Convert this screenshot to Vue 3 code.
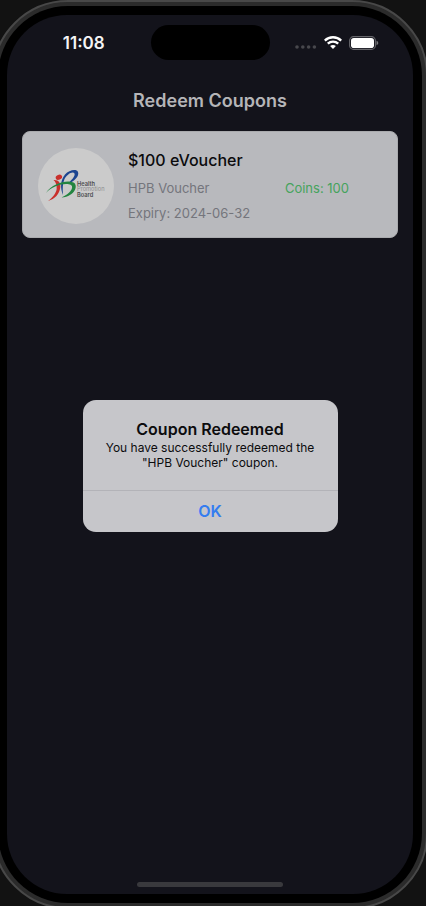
<script setup>
import { ref } from 'vue'

const coupons = [
  { id: 1, title: '$100 eVoucher', provider: 'HPB Voucher', expiry: '2024-06-32', coins: 100 },
]
const redeemed = ref(coupons[0])
</script>

<template>
  <div class="stage">
    <div class="device">
      <div class="bezel">
        <div class="screen">
          <header class="status">
            <span class="time">11:08</span>
            <span class="island"></span>
            <span class="indicators">
              <svg class="dots" width="22" height="4" viewBox="0 0 22 4" aria-hidden="true">
                <circle cx="2" cy="2" r="1.8" />
                <circle cx="7.8" cy="2" r="1.8" />
                <circle cx="13.6" cy="2" r="1.8" />
                <circle cx="19.4" cy="2" r="1.8" />
              </svg>
              <svg width="18" height="14" viewBox="0 0 18 14" aria-hidden="true">
                <g fill="none" stroke="#fff" stroke-width="2.4">
                  <path d="M.8 4.600C5.300 .2 12.700 .2 17.200 4.600" />
                  <path d="M3.800 7.700c3-2.8 7.400-2.8 10.400 0" />
                </g>
                <path d="M6.1 10.1c1.700-1.500 4.100-1.500 5.800 0L9 13.100z" fill="#fff" />
              </svg>
              <svg width="30" height="14" viewBox="0 0 30 14" aria-hidden="true">
                <rect x=".6" y=".6" width="25.8" height="12.8" rx="4" fill="none" stroke="#66666b" stroke-width="1.1" />
                <rect x="2" y="2" width="23" height="10" rx="2.8" fill="#fff" />
                <path d="M27.5 4.8c2.3.7 2.3 3.7 0 4.4z" fill="#77777b" />
              </svg>
            </span>
          </header>

          <main class="content">
            <h1>Redeem Coupons</h1>
            <article v-for="coupon in coupons" :key="coupon.id" class="card">
              <div class="logo">
                <svg width="76" height="76" viewBox="0 0 76 76" role="img" aria-label="Health Promotion Board">
                  <path d="M25 47C22 40 22.500 32 27 26.500C31 22 38.500 20.500 40 24C41.500 28 36.500 33.500 29 36C33.500 32.500 37.500 28 36.500 25.500C35 22.500 29 26 26.500 31C24.500 35.500 24.500 41 25 47Z" fill="#1c4590" />
                  <path d="M15.500 32C20.500 31.500 23 35 22.300 39.500C21.500 46 17 51 10 53C14.500 49.500 18.500 45 18.700 40.500C18.700 36.500 17.700 34 15.500 32Z" fill="#c9302c" />
                  <ellipse cx="20.900" cy="29.300" rx="3.300" ry="2.500" transform="rotate(-22 20.900 29.300)" fill="#c9302c" />
                  <path d="M8 45C14 35.500 29 31.500 35.500 34.500C40.500 37 37.500 48.500 23.500 49.500C31.500 46 36.500 39.500 33 37C28 34.500 15 37 8 45Z" fill="#238540" />
                  <g font-family="Inter, sans-serif" font-size="5.700">
                    <text x="39" y="37.500" fill="#4c4c4f" font-weight="600">Health</text>
                    <text x="39" y="43" fill="#8b8b8e">Promotion</text>
                    <text x="39" y="48.500" fill="#4c4c4f" font-weight="600">Board</text>
                  </g>
                </svg>
              </div>
              <div class="details">
                <h2>{{ coupon.title }}</h2>
                <p>{{ coupon.provider }}</p>
                <p>Expiry: {{ coupon.expiry }}</p>
              </div>
              <p class="coins">Coins: {{ coupon.coins }}</p>
            </article>
          </main>

          <span class="home-bar"></span>

          <div v-if="redeemed" class="overlay">
            <section class="dialog" role="alertdialog" aria-labelledby="alert-title" aria-describedby="alert-text">
              <div class="message">
                <h2 id="alert-title">Coupon Redeemed</h2>
                <p id="alert-text">You have successfully redeemed the "{{ redeemed.provider }}" coupon.</p>
              </div>
              <button type="button" @click="redeemed = null">OK</button>
            </section>
          </div>
        </div>
      </div>
    </div>
  </div>
</template>

<style>
body {
  margin: 0;
  background: #121212;
}
</style>

<style scoped>
* {
  box-sizing: border-box;
}
.stage {
  display: flex;
  height: 100vh;
  overflow: hidden;
  font-family: Inter, "Liberation Sans", sans-serif;
}
h1, h2, p {
  margin: 0;
}
.device {
  flex: 1;
  display: flex;
  min-height: calc(100vh + 3px);
  margin: 0 -2px 0 -8px;
  padding: 4px;
  border: 2px solid #484848;
  border-radius: 76px;
  background: #2b2b2b;
}
.bezel {
  flex: 1;
  display: flex;
  padding: 9px;
  border-radius: 70px;
  background: #000;
}
.screen {
  position: relative;
  flex: 1;
  display: flex;
  flex-direction: column;
  border-radius: 60px;
  background: #13131b;
  overflow: hidden;
}
.status {
  display: grid;
  grid-template-columns: 1fr 119px 1fr;
  align-items: center;
  padding-top: 10px;
}
.time {
  padding-left: 10px;
  color: #f4f4f5;
  font-size: 17px;
  font-weight: 600;
  line-height: 20px;
  text-align: center;
}
.island {
  height: 35px;
  border-radius: 18px;
  background: #000;
}
.indicators {
  display: flex;
  align-items: center;
  justify-content: flex-end;
  gap: 7px;
  padding-right: 34px;
}
.dots {
  margin-top: 8px;
  fill: #48484d;
}
.content {
  flex: 1;
  padding: 29px 15px;
}
h1 {
  margin-bottom: 18px;
  color: #b5b5b8;
  font-size: 18px;
  font-weight: 600;
  line-height: 24px;
  text-align: center;
}
.card {
  display: flex;
  align-items: center;
  padding: 13px 48px 11px 15px;
  border: 1px solid #a9aaad;
  border-radius: 8px;
  background: #b8b9bd;
}
.logo {
  display: flex;
  flex: none;
  margin-right: 14px;
  border-radius: 50%;
  background: #cbcbcb;
}
.details {
  flex: 1;
  padding-top: 3px;
}
.details h2 {
  margin-bottom: 4px;
  color: #0b0b0d;
  font-size: 16px;
  font-weight: 500;
  line-height: 24px;
}
.details p, .coins {
  color: #74757c;
  font-size: 13px;
  line-height: 25px;
}
.coins {
  padding-top: 6px;
}
.card .coins {
  color: #45a35c;
}
.home-bar {
  align-self: center;
  width: 146px;
  height: 5px;
  margin-bottom: 7px;
  border-radius: 3px;
  background: #39393d;
}
.overlay {
  position: absolute;
  inset: 0;
  display: grid;
  place-items: center;
  padding-top: 22px;
}
.dialog {
  width: 255px;
  border-radius: 13px;
  background: #c6c6ca;
  color: #0c0c0e;
  text-align: center;
  overflow: hidden;
}
.message {
  padding: 18px 16px 20px;
}
.dialog h2 {
  font-size: 16px;
  font-weight: 600;
  line-height: 22px;
}
.message p {
  font-size: 12px;
  line-height: 15px;
}
.dialog button {
  display: block;
  width: 100%;
  height: 42px;
  padding: 0;
  border: 0;
  border-top: 1px solid #b3b3b8;
  background: transparent;
  color: #347df0;
  font: inherit;
  font-size: 16px;
  font-weight: 600;
}
</style>
